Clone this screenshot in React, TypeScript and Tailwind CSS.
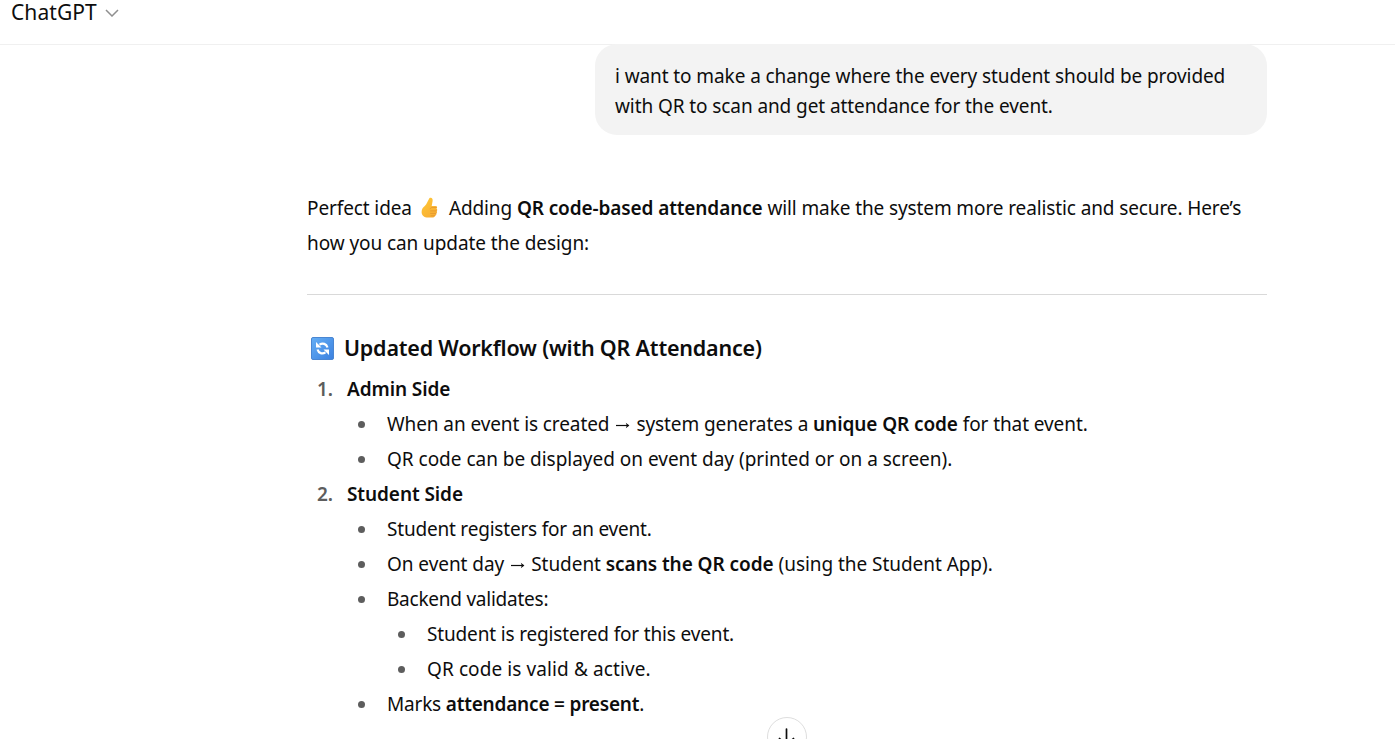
import type { ReactNode } from "react";

function ThumbsUp() {
  return (
    <svg className="ml-[8px] mr-[9px] inline-block h-[22px] w-[20px] align-[-4px]" viewBox="0 0 20 22" aria-hidden="true">
      <defs>
        <linearGradient id="thumb" x1="0" y1="0" x2="0.7" y2="1">
          <stop offset="0" stopColor="#ffc935" />
          <stop offset="1" stopColor="#f8ae35" />
        </linearGradient>
      </defs>
      <path d="M9.500 1c2.300-.9 3.500.9 3.100 2.900l-.9 5h3.900c1.700 0 2 1.700.9 2.500 1.100.8.9 2.100.1 2.700.8.8.6 2-.4 2.500.5 1.200-.1 2.200-1.300 2.400-.5 1.100-1.400 1.600-2.800 1.600H8C4.100 20.600 1.600 18.200 1.600 14.900c0-2.900 1.500-4.500 3.400-6.100C6.900 7 7.700 3.900 9.500 1Z" fill="url(#thumb)" />
      <path d="M10.200 11.800c.4-.9 1-1.300 2-1.300h4M10.600 13.900h5.700M10.600 16.400h5.300M11 18.800h3.700" fill="none" stroke="#e0902c" strokeWidth=".7" strokeLinecap="round" />
    </svg>
  );
}

function RefreshEmoji() {
  return (
    <svg className="h-[23px] w-[23px] shrink-0" viewBox="0 0 23 23" aria-hidden="true">
      <defs>
        <linearGradient id="tile" x1="0" y1="0" x2="1" y2="1">
          <stop offset="0" stopColor="#65aff5" />
          <stop offset="1" stopColor="#3b80df" />
        </linearGradient>
      </defs>
      <rect x=".5" y=".5" width="22" height="22" rx="1.500" fill="url(#tile)" stroke="#4a86d2" />
      <path d="M8.500 7.600c3.200-2 6.900-.9 8 2.900M14.500 15.400c-3.200 2-6.900.9-8-2.900" fill="none" stroke="#fff" strokeWidth="2.200" />
      <path d="M5 5v5.500h5.500ZM18 18v-5.500h-5.500Z" fill="#fff" />
    </svg>
  );
}

function Arrow() {
  return (
    <svg className="ml-[7px] mr-[6px] inline-block h-[9px] w-[14px] align-[1px]" viewBox="0 0 14 9" role="img" aria-label="to">
      <path d="M0 4.500h12.500" fill="none" stroke="#0d0d0d" strokeWidth="1.200" />
      <path d="m9.800 1.800 3.600 2.700-3.600 2.700 1-2.700Z" fill="#0d0d0d" />
    </svg>
  );
}

function Bold({ children }: { children: ReactNode }) {
  return <strong className="font-semibold">{children}</strong>;
}

function Item({ children, nested, tracking = "tracking-[-0.09px]" }: { children: ReactNode; nested?: ReactNode; tracking?: string }) {
  return (
    <li>
      <div className="flex h-[35px] items-center whitespace-nowrap">
        <span className="ml-[11px] mr-[22px] size-[7px] shrink-0 rounded-full bg-[#5d5d5d]" />
        <div className={tracking}>{children}</div>
      </div>
      {nested && <ul className="pl-10">{nested}</ul>}
    </li>
  );
}

function Step({ number, title, children }: { number: string; title: string; children: ReactNode }) {
  return (
    <li>
      <div className="flex h-[35px] items-center font-semibold">
        <span className="w-[40px] pl-[10px] text-[#5d5d5d]">{number}</span>
        <span className="tracking-[-0.08px]">{title}</span>
      </div>
      <ul className="pl-10">{children}</ul>
    </li>
  );
}

export default function App() {
  return (
    <div className="relative h-[739px] w-[1395px] overflow-hidden bg-white font-['Noto_Sans',sans-serif] text-[19px] text-[#0d0d0d]">
      <header className="flex h-[45px] items-start border-b border-[#f0f0f0] pl-[11px]">
        <span className="text-[21px] leading-[24px] tracking-[0.08px]">ChatGPT</span>
        <svg className="ml-[8px] mt-[9px] h-[8px] w-[14px]" viewBox="0 0 14 8" fill="none" stroke="#8f8f8f" strokeWidth="1.500">
          <path d="m1 1 6 6 6-6" />
        </svg>
      </header>

      <main className="ml-[307px] w-[960px]">
        <div className="mt-[-1px] ml-auto h-[91px] w-[672px] rounded-[22px] bg-[#f3f3f3] pl-5 pt-[17px] leading-[30px] tracking-[-0.09px] whitespace-nowrap">
          <p>i want to make a change where the every student should be provided</p>
          <p>with QR to scan and get attendance for the event.</p>
        </div>

        <div className="mt-[56px] leading-[35px] tracking-[-0.11px] whitespace-nowrap">
          <p>
            Perfect idea<ThumbsUp />Adding <Bold>QR code-based attendance</Bold> will make the system more realistic and secure. Here’s
          </p>
          <p className="tracking-[-0.08px]">how you can update the design:</p>
        </div>

        <hr className="mt-[33px] border-[#d9d9d9]" />

        <h3 className="mt-[38px] flex h-[30px] items-center gap-[10px] pl-[4px] text-[21.5px] font-semibold tracking-[-0.2px]">
          <RefreshEmoji />
          <span>Updated Workflow (with QR Attendance)</span>
        </h3>

        <ol className="mt-[9px]">
          <Step number="1." title="Admin Side">
            <Item>When an event is created<Arrow />system generates a <Bold>unique QR code</Bold> for that event.</Item>
            <Item tracking="tracking-[-0.02px]">QR code can be displayed on event day (printed or on a screen).</Item>
          </Step>
          <Step number="2." title="Student Side">
            <Item tracking="tracking-[-0.2px]">Student registers for an event.</Item>
            <Item tracking="tracking-[-0.05px]">On event day<Arrow />Student <Bold>scans the QR code</Bold> (using the Student App).</Item>
            <Item
              nested={
                <>
                  <Item tracking="tracking-[-0.16px]">Student is registered for this event.</Item>
                  <Item tracking="tracking-[0.1px]">QR code is valid &amp; active.</Item>
                </>
              }
              tracking="tracking-[-0.24px]"
            >
              Backend validates:
            </Item>
            <Item tracking="tracking-[-0.2px]">Marks <Bold>attendance = present</Bold>.</Item>
          </Step>
        </ol>
      </main>

      <button className="absolute left-[767px] top-[717px] flex size-10 items-center justify-center rounded-full border border-[#dedede] bg-white" aria-label="Scroll to bottom">
        <svg className="size-[20px]" viewBox="0 0 20 20" fill="none" stroke="#0d0d0d" strokeWidth="1.700" strokeLinecap="round" strokeLinejoin="round">
          <path d="M9.500 2v15.500M2.500 11.500l7 6.500 7-6.500" />
        </svg>
      </button>
    </div>
  );
}
